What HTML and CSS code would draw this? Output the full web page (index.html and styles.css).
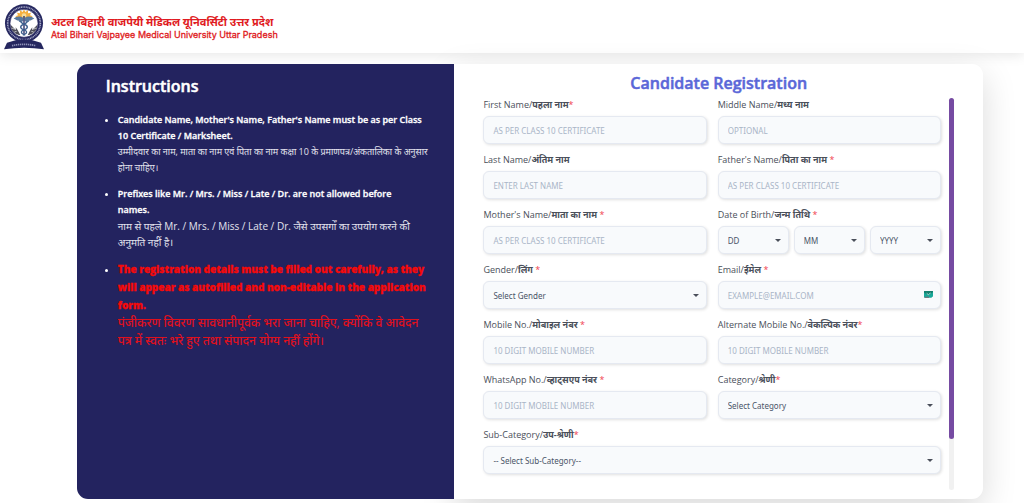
FILE: index.html
```html
<!DOCTYPE html>
<html lang="en">
<head>
<meta charset="UTF-8">
<meta name="viewport" content="width=device-width, initial-scale=1.0">
<title>Candidate Registration</title>
<link rel="stylesheet" href="styles.css">
</head>
<body>
<header class="site-header">
  <svg class="logo" viewBox="0 0 120 138" aria-hidden="true">
    <circle cx="60" cy="58" r="57" fill="#25275f"/>
    <circle cx="60" cy="58" r="49" fill="none" stroke="#a9acca" stroke-width="5" stroke-dasharray="3 2"/>
    <circle cx="60" cy="58" r="42" fill="#fff" stroke="#25275f" stroke-width="2"/>
    <path d="M60 16l4 8 8-5 0 9 9-2-3 8 8 3-8 5H42l-8-5 8-3-3-8 9 2 0-9 8 5z" fill="#f5b041"/>
    <circle cx="60" cy="35" r="7" fill="#f7dc9b"/>
    <path d="M58 42C48 35 37 37 29 44c7 1 9 6 16 6-3 4 7 6 13 1zM62 42c10-7 21-5 29 2-7 1-9 6-16 6 3 4-7 6-13 1z" fill="#5a7a9e"/>
    <path d="M60 36v55" stroke="#25275f" stroke-width="4"/>
    <path d="M50 52c0 9 20 8 20 17S52 77 52 84s9 7 11 10M70 52c0 9-20 8-20 17s18 8 18 15-9 7-11 10" fill="none" stroke="#3c5f8d" stroke-width="4"/>
    <path d="M20 62c2 18 11 28 29 32l-8-16-6-8 1 9zM100 62c-2 18-11 28-29 32l8-16 6-8-1 9z" fill="#4b4c57"/>
    <path d="M24 72l8 4M31 84l7-2M96 72l-8 4M89 84l-7-2" stroke="#fff" stroke-width="2"/>
    <path d="M9 116q51-21 102 0l9 20q-60-10-120 0z" fill="#25275f"/>
    <path d="M24 125q36-8 72 0" fill="none" stroke="#8f92b8" stroke-width="5" stroke-dasharray="4 2"/>
  </svg>
  <div class="brand">
    <div class="brand-hi" lang="hi">अटल बिहारी वाजपेयी मेडिकल यूनिवर्सिटी उत्तर प्रदेश</div>
    <div class="brand-en">Atal Bihari Vajpayee Medical University Uttar Pradesh</div>
  </div>
</header>

<main class="card">
  <section class="instructions">
    <h2>Instructions</h2>
    <ul>
      <li>
        <strong>Candidate Name, Mother's Name, Father's Name must be as per Class 10 Certificate / Marksheet.</strong>
        <p class="small" lang="hi">उम्मीदवार का नाम, माता का नाम एवं पिता का नाम कक्षा 10 के प्रमाणपत्र/अंकतालिका के अनुसार होना चाहिए।</p>
      </li>
      <li>
        <strong>Prefixes like Mr. / Mrs. / Miss / Late / Dr. are not allowed before<br>names.</strong>
        <p lang="hi">नाम से पहले Mr. / Mrs. / Miss / Late / Dr. जैसे उपसर्गों का उपयोग करने की अनुमति नहीं है।</p>
      </li>
      <li class="warning">
        <strong>The registration details must be filled out carefully, as they will appear as autofilled and non-editable in the application form.</strong>
        <p lang="hi">पंजीकरण विवरण सावधानीपूर्वक भरा जाना चाहिए, क्योंकि वे आवेदन<br>पत्र में स्वतः भरे हुए तथा संपादन योग्य नहीं होंगे।</p>
      </li>
    </ul>
  </section>

  <section class="registration">
    <h1>Candidate Registration</h1>
    <div class="form-area">
      <form class="form-grid">
        <div class="field">
          <label for="first-name">First Name/<b>पहला नाम</b><span class="req">*</span></label>
          <input type="text" id="first-name" placeholder="AS PER CLASS 10 CERTIFICATE">
        </div>
        <div class="field">
          <label for="middle-name">Middle Name/<b>मध्य नाम</b></label>
          <input type="text" id="middle-name" placeholder="OPTIONAL">
        </div>
        <div class="field">
          <label for="last-name">Last Name/<b>अंतिम नाम</b></label>
          <input type="text" id="last-name" placeholder="ENTER LAST NAME">
        </div>
        <div class="field">
          <label for="father-name">Father's Name/<b>पिता का नाम</b> <span class="req">*</span></label>
          <input type="text" id="father-name" placeholder="AS PER CLASS 10 CERTIFICATE">
        </div>
        <div class="field">
          <label for="mother-name">Mother's Name/<b>माता का नाम</b> <span class="req">*</span></label>
          <input type="text" id="mother-name" placeholder="AS PER CLASS 10 CERTIFICATE">
        </div>
        <div class="field">
          <label for="dob-day">Date of Birth/<b>जन्म तिथि</b> <span class="req">*</span></label>
          <div class="dob">
            <select id="dob-day"><option>DD</option></select>
            <select id="dob-month" aria-label="Month"><option>MM</option></select>
            <select id="dob-year" aria-label="Year"><option>YYYY</option></select>
          </div>
        </div>
        <div class="field">
          <label for="gender">Gender/<b>लिंग</b> <span class="req">*</span></label>
          <select id="gender"><option>Select Gender</option></select>
        </div>
        <div class="field">
          <label for="email">Email/<b>ईमेल</b> <span class="req">*</span></label>
          <div class="email-box">
            <input type="email" id="email" placeholder="EXAMPLE@EMAIL.COM">
            <svg class="mail-icon" viewBox="0 0 27 21" aria-hidden="true">
              <rect width="27" height="20" rx="2" fill="#18a999"/>
              <path d="M0 0h27v4L14 12 0 5z" fill="#14806f"/>
              <path d="M8 7l5 4 7-5" fill="none" stroke="#fff" stroke-width="2"/>
              <path d="M2 17h13v4H2z" fill="#6c7a80"/>
              <path d="M22 21l5-5v5z" fill="#fff"/>
            </svg>
          </div>
        </div>
        <div class="field">
          <label for="mobile">Mobile No./<b>मोबाइल नंबर</b> <span class="req">*</span></label>
          <input type="tel" id="mobile" placeholder="10 DIGIT MOBILE NUMBER">
        </div>
        <div class="field">
          <label for="alt-mobile">Alternate Mobile No./<b>वेकल्पिक नंबर</b><span class="req">*</span></label>
          <input type="tel" id="alt-mobile" placeholder="10 DIGIT MOBILE NUMBER">
        </div>
        <div class="field">
          <label for="whatsapp">WhatsApp No./<b>व्हाट्सएप नंबर</b> <span class="req">*</span></label>
          <input type="tel" id="whatsapp" placeholder="10 DIGIT MOBILE NUMBER">
        </div>
        <div class="field">
          <label for="category">Category/<b>श्रेणी</b><span class="req">*</span></label>
          <select id="category"><option>Select Category</option></select>
        </div>
        <div class="field wide">
          <label for="sub-category">Sub-Category/<b>उप-श्रेणी</b><span class="req">*</span></label>
          <select id="sub-category"><option>-- Select Sub-Category--</option></select>
        </div>
      </form>
      <div class="scroll-track"><div class="scroll-thumb"></div></div>
    </div>
  </section>
</main>
</body>
</html>
```
FILE: styles.css
```css
* {
  box-sizing: border-box;
}
body {
  margin: 0;
  background: #fff;
  font-family: "Open Sans", "Noto Sans", sans-serif;
  color: #4a4f5a;
}

/* Header */
.site-header {
  display: flex;
  align-items: center;
  gap: 7px;
  height: 53px;
  padding: 0 4px;
  background: #fff;
  box-shadow: 0 2px 12px rgba(0, 0, 0, 0.1);
}
.logo {
  width: 40px;
  height: 46px;
}
.brand {
  padding-top: 2px;
  color: #e01b22;
}
.brand-hi {
  font-size: 11px;
  font-weight: 700;
  line-height: 14px;
}
.brand-en {
  font-family: Inter, "Liberation Sans", Arial, sans-serif;
  font-size: 9px;
  line-height: 12px;
  -webkit-text-stroke: 0.3px #e01b22;
}

/* Card */
.card {
  display: grid;
  grid-template-columns: 5fr 7fr;
  margin: 11px 4% 4px 7.5%;
}
.instructions {
  position: relative;
  z-index: 1;
  padding: 12px 23px 12px 29px;
  border-radius: 11px 0 0 11px;
  background: #23235f;
  color: #fff;
}
.instructions h2 {
  margin: 0 0 16px;
  font-size: 16px;
  font-weight: 600;
  line-height: 20px;
  -webkit-text-stroke: 0.5px #fff;
}
.instructions ul {
  margin: 0;
  padding-left: 12px;
  font-size: 9px;
  line-height: 16px;
}
.instructions li {
  margin-bottom: 10px;
}
.instructions strong {
  font-weight: 600;
  -webkit-text-stroke: 0.3px currentColor;
}
.instructions p {
  margin: 0;
  font-size: 10px;
  color: #e4e4ee;
}
.instructions .small {
  font-size: 9px;
}
.instructions .warning {
  font-size: 10px;
  line-height: 18px;
}
.warning::marker {
  font-size: 9px;
  color: #fff;
}
.warning strong {
  font-weight: 800;
  color: #f50a0a;
}
.instructions .warning p {
  font-size: 12px;
  font-weight: 500;
  color: #e0101c;
}

/* Registration form */
.registration {
  padding: 9px 29px;
  border-radius: 0 11px 11px 0;
  background: #fff;
  box-shadow: 0 11px 34px rgba(0, 0, 0, 0.15);
}
.registration h1 {
  margin: 0 0 5px;
  font-size: 16px;
  font-weight: 600;
  line-height: 20px;
  text-align: center;
  color: #5a67d8;
  -webkit-text-stroke: 0.5px #5a67d8;
}
.form-area {
  display: flex;
  gap: 8px;
}
.form-grid {
  flex: 1;
  display: grid;
  grid-template-columns: 1fr 1fr;
  gap: 9px 11px;
  padding-bottom: 16px;
}
.field {
  display: flex;
  flex-direction: column;
  gap: 4px;
  min-width: 0;
}
.wide {
  grid-column: 1 / 3;
}
label {
  font-size: 9px;
  font-weight: 500;
  line-height: 14px;
  white-space: nowrap;
}
.req {
  color: #f03e4e;
}
input,
select {
  width: 100%;
  height: 28px;
  padding: 0 9px;
  border: 1px solid #e5e9f1;
  border-radius: 6px;
  background: #f8fafc;
  box-shadow: 1px 1px 3px rgba(0, 0, 0, 0.12);
  font-family: "Noto Sans", sans-serif;
  font-size: 8px;
  color: #4a5568;
}
input::placeholder {
  color: #a9b5c7;
}
select {
  appearance: none;
  background: #f8fafc url("data:image/svg+xml,%3Csvg xmlns='http://www.w3.org/2000/svg' viewBox='0 0 6 3'%3E%3Cpath d='M0 0h6L3 3z' fill='%234a4f5a'/%3E%3C/svg%3E") no-repeat right 7px center / 6px 3px;
}
.dob {
  display: flex;
  gap: 5px;
}
.email-box {
  position: relative;
  display: flex;
}
.mail-icon {
  position: absolute;
  top: 10px;
  right: 8px;
  width: 9px;
  height: 7px;
}
.scroll-track {
  width: 5px;
  border-radius: 3px;
  background: #f1f1f1;
}
.scroll-thumb {
  height: 87%;
  border-radius: 3px;
  background: #764ba2;
}
```
